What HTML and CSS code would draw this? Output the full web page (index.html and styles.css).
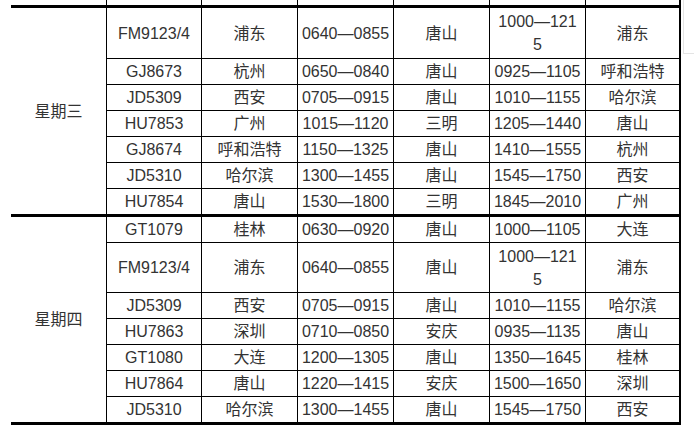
FILE: index.html
```html
<!DOCTYPE html>
<html lang="zh-CN">
<head>
<meta charset="utf-8">
<title>航班时刻表</title>
<link rel="stylesheet" href="styles.css">
</head>
<body>
<div class="page">
  <table class="schedule">
    <colgroup>
      <col class="c1"><col class="c2"><col class="c3"><col class="c4"><col class="c5"><col class="c6"><col class="c7">
    </colgroup>
    <tbody>
      <tr class="prev">
        <td class="day"></td><td></td><td></td><td></td><td></td><td></td><td></td>
      </tr>
    </tbody>
    <tbody class="group">
      <tr class="tall">
        <td class="day" rowspan="7">星期三</td>
        <td>FM9123/4</td><td>浦东</td><td>0640—0855</td><td>唐山</td><td>1000—121<br>5</td><td>浦东</td>
      </tr>
      <tr><td>GJ8673</td><td>杭州</td><td>0650—0840</td><td>唐山</td><td>0925—1105</td><td>呼和浩特</td></tr>
      <tr><td>JD5309</td><td>西安</td><td>0705—0915</td><td>唐山</td><td>1010—1155</td><td>哈尔滨</td></tr>
      <tr><td>HU7853</td><td>广州</td><td>1015—1120</td><td>三明</td><td>1205—1440</td><td>唐山</td></tr>
      <tr><td>GJ8674</td><td>呼和浩特</td><td>1150—1325</td><td>唐山</td><td>1410—1555</td><td>杭州</td></tr>
      <tr><td>JD5310</td><td>哈尔滨</td><td>1300—1455</td><td>唐山</td><td>1545—1750</td><td>西安</td></tr>
      <tr class="last"><td>HU7854</td><td>唐山</td><td>1530—1800</td><td>三明</td><td>1845—2010</td><td>广州</td></tr>
    </tbody>
    <tbody class="group">
      <tr>
        <td class="day" rowspan="7">星期四</td>
        <td>GT1079</td><td>桂林</td><td>0630—0920</td><td>唐山</td><td>1000—1105</td><td>大连</td>
      </tr>
      <tr class="tall2"><td>FM9123/4</td><td>浦东</td><td>0640—0855</td><td>唐山</td><td>1000—121<br>5</td><td>浦东</td></tr>
      <tr><td>JD5309</td><td>西安</td><td>0705—0915</td><td>唐山</td><td>1010—1155</td><td>哈尔滨</td></tr>
      <tr><td>HU7863</td><td>深圳</td><td>0710—0850</td><td>安庆</td><td>0935—1135</td><td>唐山</td></tr>
      <tr><td>GT1080</td><td>大连</td><td>1200—1305</td><td>唐山</td><td>1350—1645</td><td>桂林</td></tr>
      <tr><td>HU7864</td><td>唐山</td><td>1220—1415</td><td>安庆</td><td>1500—1650</td><td>深圳</td></tr>
      <tr class="final"><td>JD5310</td><td>哈尔滨</td><td>1300—1455</td><td>唐山</td><td>1545—1750</td><td>西安</td></tr>
    </tbody>
  </table>
  <div class="side-panel"></div>
</div>
</body>
</html>
```

FILE: styles.css
```css
html, body {
  margin: 0;
  padding: 0;
  background: #fff;
}

.page {
  position: relative;
  width: 694px;
  height: 425px;
  overflow: hidden;
  padding-left: 11px;
  box-sizing: border-box;
}

.schedule {
  border-collapse: separate;
  border-spacing: 0;
  table-layout: fixed;
  width: 670px;
  border-right: 2px solid #000;
  font-family: "Liberation Sans", "Noto Sans CJK SC", sans-serif;
  font-size: 16px;
  line-height: 23px;
  color: #333;
}

.c1 { width: 95px; }
.c2 { width: 95px; }
.c3 { width: 96px; }
.c4 { width: 96px; }
.c5 { width: 96px; }
.c6 { width: 96px; }
.c7 { width: 94px; }

.schedule td {
  box-sizing: border-box;
  border-left: 1px solid #000;
  border-bottom: 1px solid #000;
  padding: 0 2px;
  height: 26px;
  text-align: center;
  vertical-align: middle;
  white-space: nowrap;
}

.schedule td.day {
  border-left: none;
}

.prev td {
  height: 8px;
  border-bottom: 3px solid #000;
}

.prev td.day {
  border-bottom: 3px solid #000;
}

.group td.day {
  border-bottom: 3px solid #000;
}

.tall td {
  height: 51px;
}

.tall2 td {
  height: 50px;
}

.last td,
.final td {
  border-bottom: 3px solid #000;
  height: 28px;
}

.side-panel {
  position: absolute;
  top: 0;
  left: 683px;
  width: 20px;
  height: 53px;
  border-left: 1px solid #e4e4e4;
  border-bottom: 1px solid #e4e4e4;
  background: #fff;
}
```
